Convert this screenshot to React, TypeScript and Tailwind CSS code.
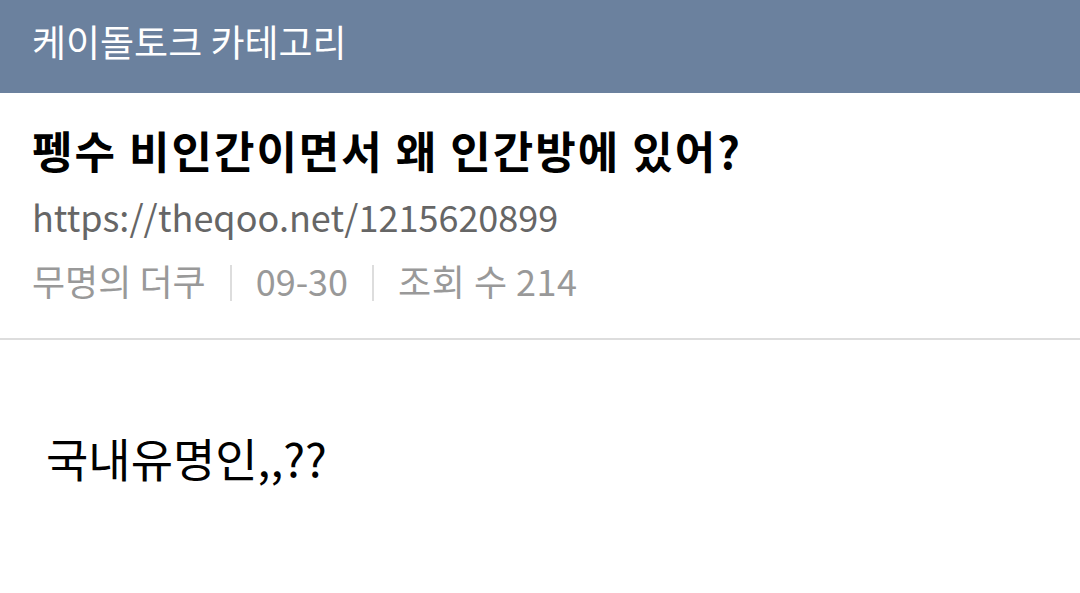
import React from 'react';

export default function App() {
    return (
        <div className="w-[1080px] h-[593px] bg-white overflow-hidden font-['Noto_Sans_CJK_KR',_sans-serif]">
            <div className="h-[93px] bg-[#6b819e] px-[32px] pt-[18px]">
                <span className="text-white text-[37px] leading-[46px]">케이돌토크 카테고리</span>
            </div>
            <div className="px-[32px] pt-[27px] pb-[32px] border-b-2 border-[#dddddd]">
                <h1 className="text-[44px] font-bold text-black leading-[60px] tracking-[2px]">펭수 비인간이면서 왜 인간방에 있어?</h1>
                <div className="text-[36px] text-[#666666] leading-[52px] mt-[10px]">https://theqoo.net/1215620899</div>
                <div className="flex items-center text-[36px] text-[#999999] leading-[52px] mt-[12px]">
                    <span>무명의 더쿠</span>
                    <span className="w-[2px] h-[36px] bg-[#dddddd] mx-[24px] mt-[6px]" />
                    <span>09-30</span>
                    <span className="w-[2px] h-[36px] bg-[#dddddd] mx-[24px] mt-[6px]" />
                    <span className="tracking-[0.5px]">조회 수 214</span>
                </div>
            </div>
            <div className="px-[46px] pt-[87px]">
                <p className="text-[46px] text-black leading-[60px]">국내유명인,,??</p>
            </div>
        </div>
    );
}
